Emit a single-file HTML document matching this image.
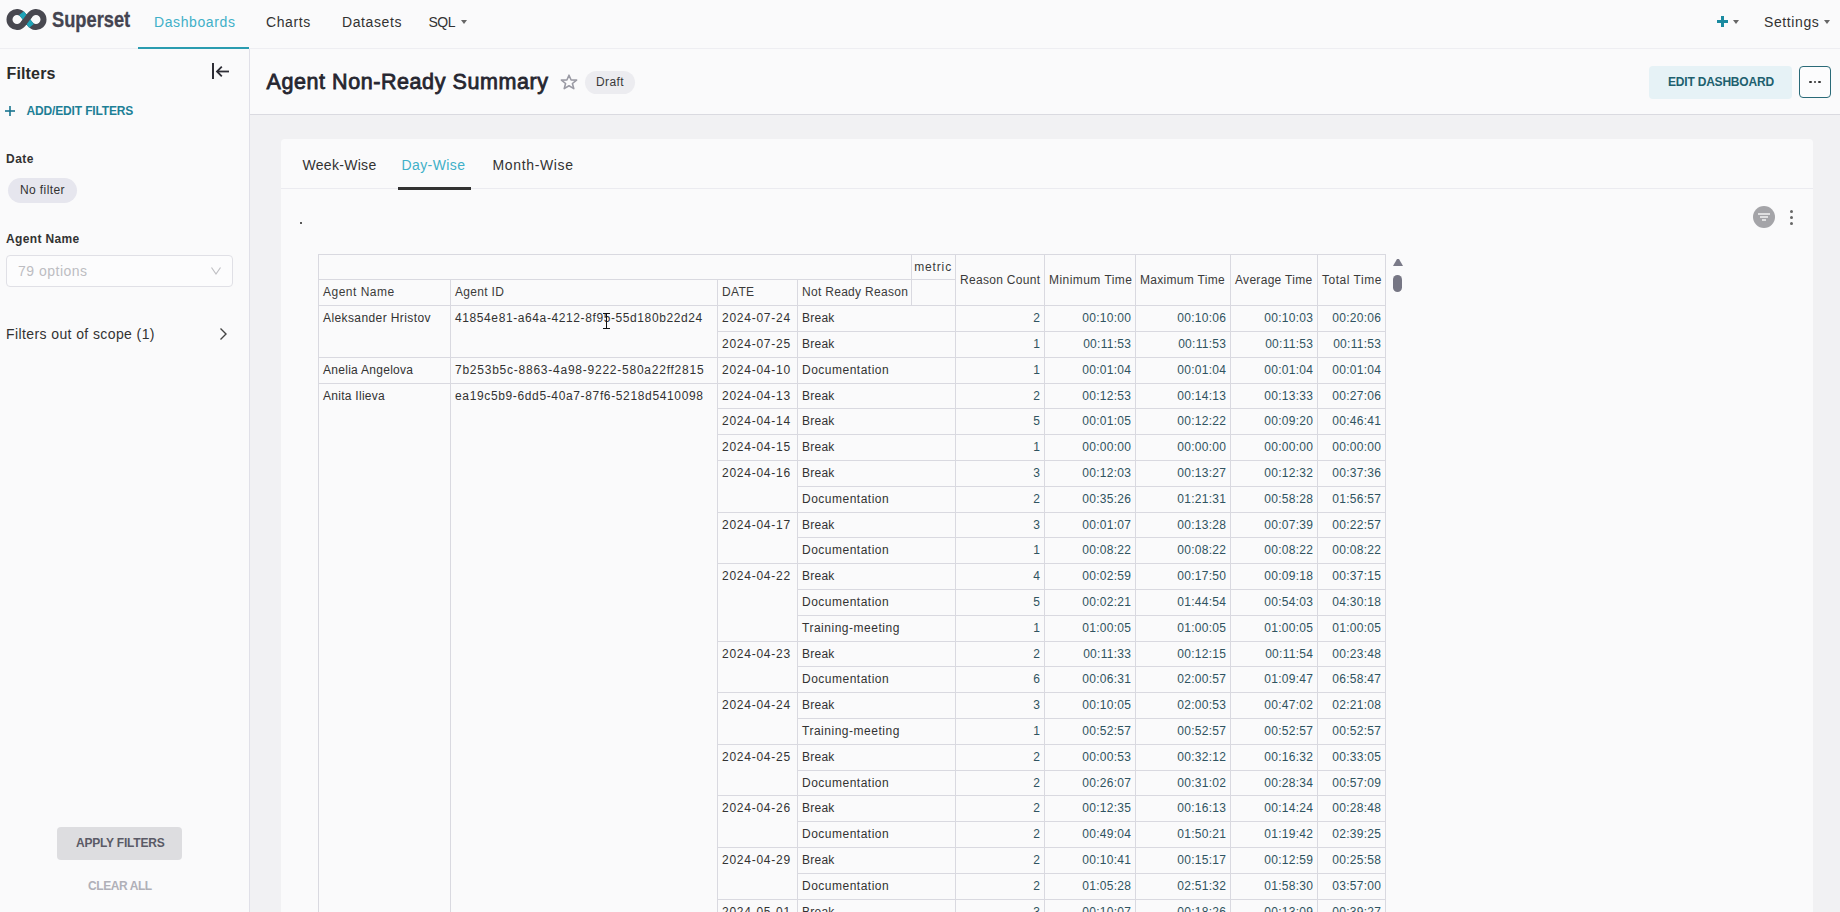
<!DOCTYPE html>
<html><head><meta charset="utf-8">
<style>
*{box-sizing:border-box;margin:0;padding:0}
html,body{width:1840px;height:912px;overflow:hidden;background:#fafafb;font-family:"Liberation Sans",sans-serif;color:#323232}
.a{position:absolute;white-space:nowrap}
#nav{position:absolute;left:0;top:0;width:1840px;height:49px;background:#fafafb;border-bottom:1px solid #eeeef2}
.nl{position:absolute;top:14px;font-size:14px;line-height:17px;color:#323232;letter-spacing:0.6px}
.caret{position:absolute;width:0;height:0;border-left:3.5px solid transparent;border-right:3.5px solid transparent;border-top:4px solid #666}
#side{position:absolute;left:0;top:49px;width:250px;height:863px;background:#fafafb;border-right:1px solid #e0e0e8}
#hdr{position:absolute;left:250px;top:49px;width:1590px;height:66px;background:#fafafb;border-bottom:1px solid #dadae0}
#grid{position:absolute;left:250px;top:115px;width:1590px;height:797px;background:#f1f1f3}
#card{position:absolute;left:281px;top:139px;width:1532px;height:800px;background:#fafafb;border-radius:4px}
.hl{position:absolute;height:1px;background:#d9d9e0}
.vl{position:absolute;width:1px;background:#d9d9e0}
.t{position:absolute;font-size:12px;line-height:14px;white-space:nowrap;color:#323232}
.th{color:#3a3a3a}
.r{text-align:right}
.num{color:#2f5360;letter-spacing:0.28px}
.ag{letter-spacing:0.28px}
.id{letter-spacing:0.6px}
.dt{letter-spacing:0.75px}
.rs{letter-spacing:0.25px}
.th{letter-spacing:0.3px}
</style></head><body>
<div id="nav">
  <svg class="a" style="left:0;top:0" width="50" height="40" viewBox="0 0 50 40">
    <path d="M22.91,14.91 A7.5,7.5 0 1 0 22.91,24.09 L30.09,14.91 A7.5,7.5 0 1 1 30.09,24.09 Z" fill="none" stroke="#484850" stroke-width="6"/>
    <line x1="21.5" y1="13.1" x2="31.5" y2="25.9" stroke="#1fa4b8" stroke-width="6"/>
    <line x1="23.5" y1="23.5" x2="29.5" y2="15.5" stroke="#484850" stroke-width="6"/>
  </svg>
  <div class="a" style="left:52px;top:6.5px;font-size:22px;line-height:26px;font-weight:bold;color:#444450;-webkit-text-stroke:0.3px #444450;transform:scaleX(0.83);transform-origin:0 0">Superset</div>
  <div class="nl" style="left:154px;color:#3fb0c8">Dashboards</div>
  <div class="a" style="left:138px;top:47px;width:111px;height:2px;background:#2a9cb0"></div>
  <div class="nl" style="left:266px">Charts</div>
  <div class="nl" style="left:342px">Datasets</div>
  <div class="nl" style="left:428.5px;letter-spacing:-0.5px">SQL</div>
  <div class="caret" style="left:460.5px;top:20px"></div>
  <div class="a" style="left:1717px;top:16px;width:11px;height:11px">
    <div class="a" style="left:0;top:4px;width:11px;height:3px;background:#1a8aa0"></div>
    <div class="a" style="left:4px;top:0;width:3px;height:11px;background:#1a8aa0"></div>
  </div>
  <div class="caret" style="left:1733px;top:20px"></div>
  <div class="nl" style="left:1764px">Settings</div>
  <div class="caret" style="left:1824px;top:20px"></div>
</div>

<div id="side">
  <div class="a" style="left:6.5px;top:14.5px;font-size:16px;line-height:19px;font-weight:bold;color:#2a2a2a;letter-spacing:0.15px">Filters</div>
  <svg class="a" style="left:208px;top:12px" width="24" height="20" viewBox="0 0 24 20">
    <line x1="5" y1="2" x2="5" y2="18" stroke="#2e2e36" stroke-width="2"/>
    <line x1="9" y1="10.5" x2="21" y2="10.5" stroke="#2e2e36" stroke-width="1.8"/>
    <polyline points="13.8,5.7 9,10.5 13.8,15.3" fill="none" stroke="#2e2e36" stroke-width="1.8"/>
  </svg>
  <svg class="a" style="left:4px;top:56px" width="12" height="12" viewBox="0 0 12 12">
    <line x1="1" y1="6" x2="11" y2="6" stroke="#1a7590" stroke-width="1.6"/>
    <line x1="6" y1="1" x2="6" y2="11" stroke="#1a7590" stroke-width="1.6"/>
  </svg>
  <div class="a" style="left:26.5px;top:55px;font-size:12px;line-height:14px;font-weight:bold;color:#1d7f96;letter-spacing:-0.15px">ADD/EDIT FILTERS</div>
  <div class="a" style="left:6px;top:103px;font-size:12px;line-height:14px;font-weight:bold;color:#323232;letter-spacing:0.5px">Date</div>
  <div class="a" style="left:8px;top:129px;width:69px;height:25px;border-radius:13px;background:#e6e6ee"></div>
  <div class="a" style="left:20px;top:134px;font-size:12px;line-height:14px;color:#323232;letter-spacing:0.4px">No filter</div>
  <div class="a" style="left:6px;top:183px;font-size:12px;line-height:14px;font-weight:bold;color:#323232;letter-spacing:0.35px">Agent Name</div>
  <div class="a" style="left:6px;top:206px;width:227px;height:32px;border:1px solid #e0e0e6;border-radius:4px;background:#fcfcfd"></div>
  <div class="a" style="left:18px;top:214px;font-size:14px;line-height:16px;color:#bdbdc2;letter-spacing:0.5px">79 options</div>
  <svg class="a" style="left:210px;top:217px" width="12" height="10" viewBox="0 0 12 10">
    <polyline points="1.5,1.5 6,8 10.5,1.5" fill="none" stroke="#c0c0c4" stroke-width="1.2"/>
  </svg>
  <div class="a" style="left:6px;top:277px;font-size:14px;line-height:16px;color:#323232;letter-spacing:0.4px">Filters out of scope (1)</div>
  <svg class="a" style="left:217px;top:277px" width="12" height="16" viewBox="0 0 12 16">
    <polyline points="3.5,2.5 9,8 3.5,13.5" fill="none" stroke="#444" stroke-width="1.4"/>
  </svg>
  <div class="a" style="left:57px;top:778px;width:125px;height:33px;border-radius:4px;background:#dddde0"></div>
  <div class="a" style="left:76px;top:787px;font-size:12px;line-height:14px;font-weight:bold;color:#5a5a66;letter-spacing:-0.2px">APPLY FILTERS</div>
  <div class="a" style="left:88px;top:830px;font-size:12px;line-height:14px;font-weight:bold;color:#b0b0b8;letter-spacing:-0.42px">CLEAR ALL</div>
</div>

<div id="hdr">
  <div class="a" style="left:16.5px;top:20.5px;font-size:21.5px;line-height:25px;color:#262630;-webkit-text-stroke:0.8px #262630;letter-spacing:0.57px">Agent Non-Ready Summary</div>
  <svg class="a" style="left:309px;top:23px" width="20" height="20" viewBox="0 0 20 20">
    <polygon points="10,3.2 12.1,8 17.6,8.1 13.4,11.5 14.8,16.6 10,13.7 5.2,16.6 6.6,11.5 2.4,8.1 7.9,8" fill="none" stroke="#9a9aa4" stroke-width="1.6" stroke-linejoin="round"/>
  </svg>
  <div class="a" style="left:335px;top:22px;width:50px;height:23px;border-radius:12px;background:#ececf0"></div>
  <div class="a" style="left:346px;top:26px;font-size:12px;line-height:14px;color:#3a3a3a;letter-spacing:0.4px">Draft</div>
  <div class="a" style="left:1399px;top:17px;width:143px;height:33px;border-radius:4px;background:#e6f2f6"></div>
  <div class="a" style="left:1418px;top:26px;font-size:12px;line-height:14px;font-weight:bold;color:#20606e;letter-spacing:-0.2px">EDIT DASHBOARD</div>
  <div class="a" style="left:1549px;top:17px;width:32px;height:32px;border-radius:4px;border:1px solid #2a6a78;background:#fcfcfd"></div>
  <div class="a" style="left:1559.2px;top:31.8px;width:2.6px;height:2.6px;border-radius:1.3px;background:#333"></div>
  <div class="a" style="left:1563.7px;top:31.8px;width:2.6px;height:2.6px;border-radius:1.3px;background:#333"></div>
  <div class="a" style="left:1568.2px;top:31.8px;width:2.6px;height:2.6px;border-radius:1.3px;background:#333"></div>
</div>

<div id="grid"></div>
<div id="card">
  <div class="a" style="left:21.5px;top:17.5px;font-size:14px;line-height:16px;color:#323232;letter-spacing:0.3px">Week-Wise</div>
  <div class="a" style="left:120.5px;top:17.5px;font-size:14px;line-height:16px;color:#3fb0c8;letter-spacing:0.4px">Day-Wise</div>
  <div class="a" style="left:211.5px;top:17.5px;font-size:14px;line-height:16px;color:#323232;letter-spacing:0.65px">Month-Wise</div>
  <div class="a" style="left:0;top:49px;width:1532px;height:1px;background:#ebebf0"></div>
  <div class="a" style="left:117px;top:48px;width:73px;height:3px;background:#323232"></div>
  <div class="a" style="left:19px;top:83px;width:2px;height:2px;border-radius:1px;background:#222"></div>
  <svg class="a" style="left:1471px;top:66px" width="24" height="24" viewBox="0 0 24 24">
    <circle cx="12" cy="12" r="11" fill="#a4a4a8"/>
    <line x1="6" y1="9" x2="18" y2="9" stroke="#fff" stroke-width="1.3"/>
    <line x1="8" y1="12" x2="16" y2="12" stroke="#fff" stroke-width="1.3"/>
    <line x1="10" y1="15" x2="14" y2="15" stroke="#fff" stroke-width="1.3"/>
  </svg>
  <div class="a" style="left:1508.5px;top:70.5px;width:3.2px;height:3.2px;border-radius:2px;background:#666"></div>
  <div class="a" style="left:1508.5px;top:76.5px;width:3.2px;height:3.2px;border-radius:2px;background:#666"></div>
  <div class="a" style="left:1508.5px;top:82.5px;width:3.2px;height:3.2px;border-radius:2px;background:#666"></div>
</div>
<div id="tbl" style="position:absolute;left:0;top:0;width:1840px;height:912px;overflow:hidden">
<div class="hl" style="left:318.00px;top:254.00px;width:1068.00px"></div>
<div class="hl" style="left:318.00px;top:279.00px;width:637.00px"></div>
<div class="hl" style="left:318.00px;top:305.00px;width:1068.00px"></div>
<div class="vl" style="left:450.00px;top:279.00px;height:26.00px"></div>
<div class="vl" style="left:717.00px;top:279.00px;height:26.00px"></div>
<div class="vl" style="left:797.00px;top:279.00px;height:26.00px"></div>
<div class="vl" style="left:911.00px;top:279.00px;height:26.00px"></div>
<div class="vl" style="left:911.00px;top:254.00px;height:25.00px"></div>
<div class="vl" style="left:318.00px;top:254.00px;height:658.00px"></div>
<div class="vl" style="left:955.00px;top:254.00px;height:658.00px"></div>
<div class="vl" style="left:1044.00px;top:254.00px;height:658.00px"></div>
<div class="vl" style="left:1135.00px;top:254.00px;height:658.00px"></div>
<div class="vl" style="left:1230.00px;top:254.00px;height:658.00px"></div>
<div class="vl" style="left:1317.00px;top:254.00px;height:658.00px"></div>
<div class="vl" style="left:1385.00px;top:254.00px;height:658.00px"></div>
<div class="vl" style="left:450.00px;top:305.00px;height:607.00px"></div>
<div class="vl" style="left:717.00px;top:305.00px;height:607.00px"></div>
<div class="vl" style="left:797.00px;top:305.00px;height:607.00px"></div>
<div class="t th r" style="left:911.00px;width:41.00px;top:259.50px;letter-spacing:0.85px">metric</div>
<div class="t th" style="left:323.00px;top:285.20px;letter-spacing:0.5px;">Agent Name</div>
<div class="t th" style="left:455.00px;top:285.20px;">Agent ID</div>
<div class="t th" style="left:722.00px;top:285.20px;">DATE</div>
<div class="t th" style="left:802.00px;top:285.20px;">Not Ready Reason</div>
<div class="t th" style="left:960.00px;top:272.50px;">Reason Count</div>
<div class="t th" style="left:1049.00px;top:272.50px;letter-spacing:0.45px;">Minimum Time</div>
<div class="t th" style="left:1140.00px;top:272.50px;">Maximum Time</div>
<div class="t th" style="left:1235.00px;top:272.50px;">Average Time</div>
<div class="t th" style="left:1322.00px;top:272.50px;letter-spacing:0.52px;">Total Time</div>
<div class="hl" style="left:717.00px;top:331.00px;width:669.00px"></div>
<div class="t ag" style="left:323.00px;top:310.50px;letter-spacing:0.4px;">Aleksander Hristov</div>
<div class="t id" style="left:455.00px;top:310.50px;">41854e81-a64a-4212-8f95-55d180b22d24</div>
<div class="t dt" style="left:722.00px;top:310.50px;">2024-07-24</div>
<div class="t rs" style="left:802.00px;top:310.50px;">Break</div>
<div class="t num r" style="left:955.00px;width:85.20px;top:310.50px">2</div>
<div class="t num r" style="left:1044.00px;width:87.20px;top:310.50px">00:10:00</div>
<div class="t num r" style="left:1135.00px;width:91.20px;top:310.50px">00:10:06</div>
<div class="t num r" style="left:1230.00px;width:83.20px;top:310.50px">00:10:03</div>
<div class="t num r" style="left:1317.00px;width:64.20px;top:310.50px">00:20:06</div>
<div class="hl" style="left:318.00px;top:357.00px;width:1068.00px"></div>
<div class="t dt" style="left:722.00px;top:336.50px;">2024-07-25</div>
<div class="t rs" style="left:802.00px;top:336.50px;">Break</div>
<div class="t num r" style="left:955.00px;width:85.20px;top:336.50px">1</div>
<div class="t num r" style="left:1044.00px;width:87.20px;top:336.50px">00:11:53</div>
<div class="t num r" style="left:1135.00px;width:91.20px;top:336.50px">00:11:53</div>
<div class="t num r" style="left:1230.00px;width:83.20px;top:336.50px">00:11:53</div>
<div class="t num r" style="left:1317.00px;width:64.20px;top:336.50px">00:11:53</div>
<div class="hl" style="left:318.00px;top:383.00px;width:1068.00px"></div>
<div class="t ag" style="left:323.00px;top:362.50px;">Anelia Angelova</div>
<div class="t id" style="left:455.00px;top:362.50px;letter-spacing:0.76px;">7b253b5c-8863-4a98-9222-580a22ff2815</div>
<div class="t dt" style="left:722.00px;top:362.50px;">2024-04-10</div>
<div class="t rs" style="left:802.00px;top:362.50px;letter-spacing:0.5px;">Documentation</div>
<div class="t num r" style="left:955.00px;width:85.20px;top:362.50px">1</div>
<div class="t num r" style="left:1044.00px;width:87.20px;top:362.50px">00:01:04</div>
<div class="t num r" style="left:1135.00px;width:91.20px;top:362.50px">00:01:04</div>
<div class="t num r" style="left:1230.00px;width:83.20px;top:362.50px">00:01:04</div>
<div class="t num r" style="left:1317.00px;width:64.20px;top:362.50px">00:01:04</div>
<div class="hl" style="left:717.00px;top:408.00px;width:669.00px"></div>
<div class="t ag" style="left:323.00px;top:388.50px;">Anita Ilieva</div>
<div class="t id" style="left:455.00px;top:388.50px;letter-spacing:0.64px;">ea19c5b9-6dd5-40a7-87f6-5218d5410098</div>
<div class="t dt" style="left:722.00px;top:388.50px;">2024-04-13</div>
<div class="t rs" style="left:802.00px;top:388.50px;">Break</div>
<div class="t num r" style="left:955.00px;width:85.20px;top:388.50px">2</div>
<div class="t num r" style="left:1044.00px;width:87.20px;top:388.50px">00:12:53</div>
<div class="t num r" style="left:1135.00px;width:91.20px;top:388.50px">00:14:13</div>
<div class="t num r" style="left:1230.00px;width:83.20px;top:388.50px">00:13:33</div>
<div class="t num r" style="left:1317.00px;width:64.20px;top:388.50px">00:27:06</div>
<div class="hl" style="left:717.00px;top:434.00px;width:669.00px"></div>
<div class="t dt" style="left:722.00px;top:413.50px;">2024-04-14</div>
<div class="t rs" style="left:802.00px;top:413.50px;">Break</div>
<div class="t num r" style="left:955.00px;width:85.20px;top:413.50px">5</div>
<div class="t num r" style="left:1044.00px;width:87.20px;top:413.50px">00:01:05</div>
<div class="t num r" style="left:1135.00px;width:91.20px;top:413.50px">00:12:22</div>
<div class="t num r" style="left:1230.00px;width:83.20px;top:413.50px">00:09:20</div>
<div class="t num r" style="left:1317.00px;width:64.20px;top:413.50px">00:46:41</div>
<div class="hl" style="left:717.00px;top:460.00px;width:669.00px"></div>
<div class="t dt" style="left:722.00px;top:439.50px;">2024-04-15</div>
<div class="t rs" style="left:802.00px;top:439.50px;">Break</div>
<div class="t num r" style="left:955.00px;width:85.20px;top:439.50px">1</div>
<div class="t num r" style="left:1044.00px;width:87.20px;top:439.50px">00:00:00</div>
<div class="t num r" style="left:1135.00px;width:91.20px;top:439.50px">00:00:00</div>
<div class="t num r" style="left:1230.00px;width:83.20px;top:439.50px">00:00:00</div>
<div class="t num r" style="left:1317.00px;width:64.20px;top:439.50px">00:00:00</div>
<div class="hl" style="left:797.00px;top:486.00px;width:589.00px"></div>
<div class="t dt" style="left:722.00px;top:465.50px;">2024-04-16</div>
<div class="t rs" style="left:802.00px;top:465.50px;">Break</div>
<div class="t num r" style="left:955.00px;width:85.20px;top:465.50px">3</div>
<div class="t num r" style="left:1044.00px;width:87.20px;top:465.50px">00:12:03</div>
<div class="t num r" style="left:1135.00px;width:91.20px;top:465.50px">00:13:27</div>
<div class="t num r" style="left:1230.00px;width:83.20px;top:465.50px">00:12:32</div>
<div class="t num r" style="left:1317.00px;width:64.20px;top:465.50px">00:37:36</div>
<div class="hl" style="left:717.00px;top:512.00px;width:669.00px"></div>
<div class="t rs" style="left:802.00px;top:491.50px;letter-spacing:0.5px;">Documentation</div>
<div class="t num r" style="left:955.00px;width:85.20px;top:491.50px">2</div>
<div class="t num r" style="left:1044.00px;width:87.20px;top:491.50px">00:35:26</div>
<div class="t num r" style="left:1135.00px;width:91.20px;top:491.50px">01:21:31</div>
<div class="t num r" style="left:1230.00px;width:83.20px;top:491.50px">00:58:28</div>
<div class="t num r" style="left:1317.00px;width:64.20px;top:491.50px">01:56:57</div>
<div class="hl" style="left:797.00px;top:537.00px;width:589.00px"></div>
<div class="t dt" style="left:722.00px;top:517.50px;">2024-04-17</div>
<div class="t rs" style="left:802.00px;top:517.50px;">Break</div>
<div class="t num r" style="left:955.00px;width:85.20px;top:517.50px">3</div>
<div class="t num r" style="left:1044.00px;width:87.20px;top:517.50px">00:01:07</div>
<div class="t num r" style="left:1135.00px;width:91.20px;top:517.50px">00:13:28</div>
<div class="t num r" style="left:1230.00px;width:83.20px;top:517.50px">00:07:39</div>
<div class="t num r" style="left:1317.00px;width:64.20px;top:517.50px">00:22:57</div>
<div class="hl" style="left:717.00px;top:563.00px;width:669.00px"></div>
<div class="t rs" style="left:802.00px;top:542.50px;letter-spacing:0.5px;">Documentation</div>
<div class="t num r" style="left:955.00px;width:85.20px;top:542.50px">1</div>
<div class="t num r" style="left:1044.00px;width:87.20px;top:542.50px">00:08:22</div>
<div class="t num r" style="left:1135.00px;width:91.20px;top:542.50px">00:08:22</div>
<div class="t num r" style="left:1230.00px;width:83.20px;top:542.50px">00:08:22</div>
<div class="t num r" style="left:1317.00px;width:64.20px;top:542.50px">00:08:22</div>
<div class="hl" style="left:797.00px;top:589.00px;width:589.00px"></div>
<div class="t dt" style="left:722.00px;top:568.50px;">2024-04-22</div>
<div class="t rs" style="left:802.00px;top:568.50px;">Break</div>
<div class="t num r" style="left:955.00px;width:85.20px;top:568.50px">4</div>
<div class="t num r" style="left:1044.00px;width:87.20px;top:568.50px">00:02:59</div>
<div class="t num r" style="left:1135.00px;width:91.20px;top:568.50px">00:17:50</div>
<div class="t num r" style="left:1230.00px;width:83.20px;top:568.50px">00:09:18</div>
<div class="t num r" style="left:1317.00px;width:64.20px;top:568.50px">00:37:15</div>
<div class="hl" style="left:797.00px;top:615.00px;width:589.00px"></div>
<div class="t rs" style="left:802.00px;top:594.50px;letter-spacing:0.5px;">Documentation</div>
<div class="t num r" style="left:955.00px;width:85.20px;top:594.50px">5</div>
<div class="t num r" style="left:1044.00px;width:87.20px;top:594.50px">00:02:21</div>
<div class="t num r" style="left:1135.00px;width:91.20px;top:594.50px">01:44:54</div>
<div class="t num r" style="left:1230.00px;width:83.20px;top:594.50px">00:54:03</div>
<div class="t num r" style="left:1317.00px;width:64.20px;top:594.50px">04:30:18</div>
<div class="hl" style="left:717.00px;top:641.00px;width:669.00px"></div>
<div class="t rs" style="left:802.00px;top:620.50px;letter-spacing:0.52px;">Training-meeting</div>
<div class="t num r" style="left:955.00px;width:85.20px;top:620.50px">1</div>
<div class="t num r" style="left:1044.00px;width:87.20px;top:620.50px">01:00:05</div>
<div class="t num r" style="left:1135.00px;width:91.20px;top:620.50px">01:00:05</div>
<div class="t num r" style="left:1230.00px;width:83.20px;top:620.50px">01:00:05</div>
<div class="t num r" style="left:1317.00px;width:64.20px;top:620.50px">01:00:05</div>
<div class="hl" style="left:797.00px;top:666.00px;width:589.00px"></div>
<div class="t dt" style="left:722.00px;top:646.50px;">2024-04-23</div>
<div class="t rs" style="left:802.00px;top:646.50px;">Break</div>
<div class="t num r" style="left:955.00px;width:85.20px;top:646.50px">2</div>
<div class="t num r" style="left:1044.00px;width:87.20px;top:646.50px">00:11:33</div>
<div class="t num r" style="left:1135.00px;width:91.20px;top:646.50px">00:12:15</div>
<div class="t num r" style="left:1230.00px;width:83.20px;top:646.50px">00:11:54</div>
<div class="t num r" style="left:1317.00px;width:64.20px;top:646.50px">00:23:48</div>
<div class="hl" style="left:717.00px;top:692.00px;width:669.00px"></div>
<div class="t rs" style="left:802.00px;top:671.50px;letter-spacing:0.5px;">Documentation</div>
<div class="t num r" style="left:955.00px;width:85.20px;top:671.50px">6</div>
<div class="t num r" style="left:1044.00px;width:87.20px;top:671.50px">00:06:31</div>
<div class="t num r" style="left:1135.00px;width:91.20px;top:671.50px">02:00:57</div>
<div class="t num r" style="left:1230.00px;width:83.20px;top:671.50px">01:09:47</div>
<div class="t num r" style="left:1317.00px;width:64.20px;top:671.50px">06:58:47</div>
<div class="hl" style="left:797.00px;top:718.00px;width:589.00px"></div>
<div class="t dt" style="left:722.00px;top:697.50px;">2024-04-24</div>
<div class="t rs" style="left:802.00px;top:697.50px;">Break</div>
<div class="t num r" style="left:955.00px;width:85.20px;top:697.50px">3</div>
<div class="t num r" style="left:1044.00px;width:87.20px;top:697.50px">00:10:05</div>
<div class="t num r" style="left:1135.00px;width:91.20px;top:697.50px">02:00:53</div>
<div class="t num r" style="left:1230.00px;width:83.20px;top:697.50px">00:47:02</div>
<div class="t num r" style="left:1317.00px;width:64.20px;top:697.50px">02:21:08</div>
<div class="hl" style="left:717.00px;top:744.00px;width:669.00px"></div>
<div class="t rs" style="left:802.00px;top:723.50px;letter-spacing:0.52px;">Training-meeting</div>
<div class="t num r" style="left:955.00px;width:85.20px;top:723.50px">1</div>
<div class="t num r" style="left:1044.00px;width:87.20px;top:723.50px">00:52:57</div>
<div class="t num r" style="left:1135.00px;width:91.20px;top:723.50px">00:52:57</div>
<div class="t num r" style="left:1230.00px;width:83.20px;top:723.50px">00:52:57</div>
<div class="t num r" style="left:1317.00px;width:64.20px;top:723.50px">00:52:57</div>
<div class="hl" style="left:797.00px;top:770.00px;width:589.00px"></div>
<div class="t dt" style="left:722.00px;top:749.50px;">2024-04-25</div>
<div class="t rs" style="left:802.00px;top:749.50px;">Break</div>
<div class="t num r" style="left:955.00px;width:85.20px;top:749.50px">2</div>
<div class="t num r" style="left:1044.00px;width:87.20px;top:749.50px">00:00:53</div>
<div class="t num r" style="left:1135.00px;width:91.20px;top:749.50px">00:32:12</div>
<div class="t num r" style="left:1230.00px;width:83.20px;top:749.50px">00:16:32</div>
<div class="t num r" style="left:1317.00px;width:64.20px;top:749.50px">00:33:05</div>
<div class="hl" style="left:717.00px;top:795.00px;width:669.00px"></div>
<div class="t rs" style="left:802.00px;top:775.50px;letter-spacing:0.5px;">Documentation</div>
<div class="t num r" style="left:955.00px;width:85.20px;top:775.50px">2</div>
<div class="t num r" style="left:1044.00px;width:87.20px;top:775.50px">00:26:07</div>
<div class="t num r" style="left:1135.00px;width:91.20px;top:775.50px">00:31:02</div>
<div class="t num r" style="left:1230.00px;width:83.20px;top:775.50px">00:28:34</div>
<div class="t num r" style="left:1317.00px;width:64.20px;top:775.50px">00:57:09</div>
<div class="hl" style="left:797.00px;top:821.00px;width:589.00px"></div>
<div class="t dt" style="left:722.00px;top:800.50px;">2024-04-26</div>
<div class="t rs" style="left:802.00px;top:800.50px;">Break</div>
<div class="t num r" style="left:955.00px;width:85.20px;top:800.50px">2</div>
<div class="t num r" style="left:1044.00px;width:87.20px;top:800.50px">00:12:35</div>
<div class="t num r" style="left:1135.00px;width:91.20px;top:800.50px">00:16:13</div>
<div class="t num r" style="left:1230.00px;width:83.20px;top:800.50px">00:14:24</div>
<div class="t num r" style="left:1317.00px;width:64.20px;top:800.50px">00:28:48</div>
<div class="hl" style="left:717.00px;top:847.00px;width:669.00px"></div>
<div class="t rs" style="left:802.00px;top:826.50px;letter-spacing:0.5px;">Documentation</div>
<div class="t num r" style="left:955.00px;width:85.20px;top:826.50px">2</div>
<div class="t num r" style="left:1044.00px;width:87.20px;top:826.50px">00:49:04</div>
<div class="t num r" style="left:1135.00px;width:91.20px;top:826.50px">01:50:21</div>
<div class="t num r" style="left:1230.00px;width:83.20px;top:826.50px">01:19:42</div>
<div class="t num r" style="left:1317.00px;width:64.20px;top:826.50px">02:39:25</div>
<div class="hl" style="left:797.00px;top:873.00px;width:589.00px"></div>
<div class="t dt" style="left:722.00px;top:852.50px;">2024-04-29</div>
<div class="t rs" style="left:802.00px;top:852.50px;">Break</div>
<div class="t num r" style="left:955.00px;width:85.20px;top:852.50px">2</div>
<div class="t num r" style="left:1044.00px;width:87.20px;top:852.50px">00:10:41</div>
<div class="t num r" style="left:1135.00px;width:91.20px;top:852.50px">00:15:17</div>
<div class="t num r" style="left:1230.00px;width:83.20px;top:852.50px">00:12:59</div>
<div class="t num r" style="left:1317.00px;width:64.20px;top:852.50px">00:25:58</div>
<div class="hl" style="left:717.00px;top:899.00px;width:669.00px"></div>
<div class="t rs" style="left:802.00px;top:878.50px;letter-spacing:0.5px;">Documentation</div>
<div class="t num r" style="left:955.00px;width:85.20px;top:878.50px">2</div>
<div class="t num r" style="left:1044.00px;width:87.20px;top:878.50px">01:05:28</div>
<div class="t num r" style="left:1135.00px;width:91.20px;top:878.50px">02:51:32</div>
<div class="t num r" style="left:1230.00px;width:83.20px;top:878.50px">01:58:30</div>
<div class="t num r" style="left:1317.00px;width:64.20px;top:878.50px">03:57:00</div>
<div class="t dt" style="left:722.00px;top:904.50px;">2024-05-01</div>
<div class="t rs" style="left:802.00px;top:904.50px;">Break</div>
<div class="t num r" style="left:955.00px;width:85.20px;top:904.50px">3</div>
<div class="t num r" style="left:1044.00px;width:87.20px;top:904.50px">00:10:07</div>
<div class="t num r" style="left:1135.00px;width:91.20px;top:904.50px">00:18:26</div>
<div class="t num r" style="left:1230.00px;width:83.20px;top:904.50px">00:13:09</div>
<div class="t num r" style="left:1317.00px;width:64.20px;top:904.50px">00:39:27</div>
</div>
<!-- scrollbar -->
<svg class="a" style="left:1393px;top:259px" width="10" height="7" viewBox="0 0 10 7"><polygon points="0,7 10,7 6,0 4,0" fill="#7a7a88"/></svg>
<div class="a" style="left:1393px;top:275px;width:9px;height:17px;border-radius:5px;background:#767684"></div>
<!-- cursor -->
<div class="a" style="left:606px;top:313px;width:1px;height:16px;background:#111"></div>
<div class="a" style="left:603px;top:313px;width:7px;height:1px;background:#111"></div>
<div class="a" style="left:603px;top:328px;width:7px;height:1px;background:#111"></div>
</body></html>
